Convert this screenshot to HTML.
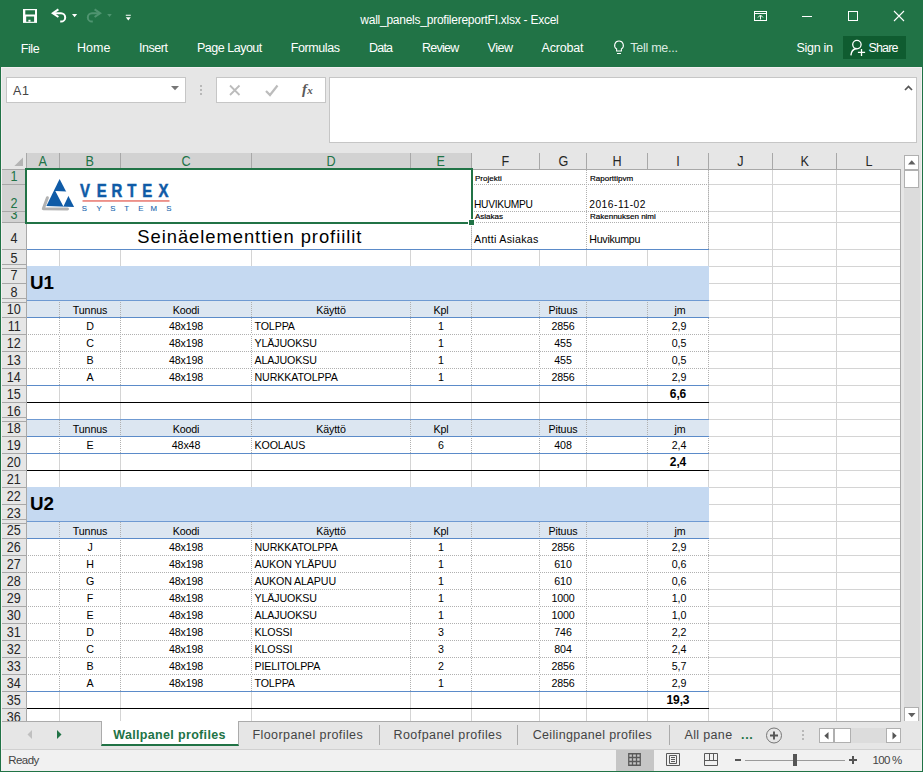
<!DOCTYPE html>
<html><head><meta charset="utf-8"><title>wall_panels_profilereportFI.xlsx - Excel</title>
<style>
*{box-sizing:border-box;margin:0;padding:0}
html,body{width:923px;height:772px;overflow:hidden;background:#fff}
body{position:relative;font-family:"Liberation Sans",sans-serif;color:#000}
.a{position:absolute}
.t{position:absolute;white-space:pre;line-height:1}
.ch{position:absolute;top:153px;height:16px;font-size:14px;line-height:17px;text-align:center;color:#262626}
.ch span,.rh span{display:inline-block;transform:scaleX(.9)}
.ch.s{background:#d2d2d2;color:#217346}
.rh{position:absolute;left:2px;width:24px;font-size:14px;text-align:center;color:#262626;overflow:hidden}
.rh.s{background:#d2d2d2;color:#217346}
.c{position:absolute;font-size:10.67px;letter-spacing:-.12px;white-space:nowrap;line-height:13px;height:13px}
.cc{text-align:center}
.b{font-weight:bold}
.vl{position:absolute;width:1px;background:#d4d4d4}
.hl{position:absolute;height:1px;background:#d4d4d4}
.dv{position:absolute;width:1px;background-image:linear-gradient(#b0b0b0 50%,transparent 50%);background-size:1px 2px}
.dh{position:absolute;height:1px;background-image:linear-gradient(90deg,transparent 50%,#b0b0b0 50%);background-size:2px 1px}
.lb{position:absolute;white-space:nowrap;line-height:1;font-size:8px;-webkit-text-stroke:.18px #000}
</style></head><body>

<div class="a" style="left:0;top:0;width:923px;height:67px;background:#217346"></div>
<div class="a" style="left:1px;top:67px;width:921px;height:86px;background:#e6e6e6"></div>
<svg class="a" style="left:20px;top:6px" width="120" height="20" viewBox="0 0 120 20">
<path d="M3 3h14v13.900H3z" fill="#fff"/><path d="M5.300 4.200h9.700v4.200h-9.700z M6.200 10.600h7.900v5.100h-7.900z" fill="#217346"/><path d="M8.400 13.800h2.100v1.900h-2.100z" fill="#fff"/>
<path d="M33.400 7.200h7.600a4.200 4.200 0 0 1 0 8.400h-.8" fill="none" stroke="#fff" stroke-width="2"/>
<path d="M38.400 3.400l-5.600 3.800 5.600 3.800" fill="none" stroke="#fff" stroke-width="2" stroke-linejoin="miter"/>
<path d="M52 8h5.200l-2.600 3.200z" fill="#fff"/>
<g stroke="#4f9470" fill="none" stroke-width="2"><path d="M79.600 7.200h-7.600a4.200 4.200 0 0 0 0 8.400h.8"/><path d="M74.600 3.400l5.600 3.800-5.600 3.800"/></g>
<path d="M87.200 8h4.600l-2.300 3z" fill="#4f9470"/>
<path d="M105.800 8.700h5v1h-5z M105.800 11.200h5l-2.500 3.400z" fill="#fff"/>
</svg>
<div class="t" style="left:360.30px;top:14.14px;font-size:12px;letter-spacing:-0.246px;color:#fff;">wall_panels_profilereportFI.xlsx - Excel</div>
<svg class="a" style="left:750px;top:6px" width="170" height="22" viewBox="0 0 170 22">
<rect x="4.500" y="5.500" width="12" height="9" fill="none" stroke="#fff" stroke-width="1"/>
<path d="M4.500 7.500h12" stroke="#fff"/><path d="M10.500 13.500v-4M8 11.500l2.500-2.500 2.500 2.500" fill="none" stroke="#fff"/>
<path d="M52 10.500h10" stroke="#fff"/>
<rect x="98.500" y="5.500" width="9" height="9" fill="none" stroke="#fff"/>
<path d="M144 5l10 10M154 5l-10 10" stroke="#fff" stroke-width="1.100"/>
</svg>
<div class="a" style="left:843px;top:36px;width:63px;height:23px;background:#0f5c30"></div>
<div class="t" style="left:20.80px;top:43.42px;font-size:12.5px;letter-spacing:-0.419px;color:#fff;">File</div>
<div class="t" style="left:77.00px;top:42.42px;font-size:12.5px;letter-spacing:0.052px;color:#fff;">Home</div>
<div class="t" style="left:139.00px;top:42.42px;font-size:12.5px;letter-spacing:-0.453px;color:#fff;">Insert</div>
<div class="t" style="left:197.00px;top:42.42px;font-size:12.5px;letter-spacing:-0.490px;color:#fff;">Page Layout</div>
<div class="t" style="left:290.80px;top:42.42px;font-size:12.5px;letter-spacing:-0.413px;color:#fff;">Formulas</div>
<div class="t" style="left:369.00px;top:42.42px;font-size:12.5px;letter-spacing:-0.802px;color:#fff;">Data</div>
<div class="t" style="left:422.00px;top:42.42px;font-size:12.5px;letter-spacing:-0.740px;color:#fff;">Review</div>
<div class="t" style="left:487.50px;top:42.42px;font-size:12.5px;letter-spacing:-0.458px;color:#fff;">View</div>
<div class="t" style="left:541.50px;top:42.42px;font-size:12.5px;letter-spacing:-0.182px;color:#fff;">Acrobat</div>
<div class="t" style="left:630.20px;top:42.42px;font-size:12.5px;letter-spacing:-0.246px;color:#dbeae1;">Tell me...</div>
<div class="t" style="left:796.50px;top:42.42px;font-size:12.5px;letter-spacing:-0.289px;color:#fff;">Sign in</div>
<div class="t" style="left:868.50px;top:42.42px;font-size:12.5px;letter-spacing:-0.840px;color:#fff;">Share</div>
<svg class="a" style="left:612px;top:39px" width="14" height="18" viewBox="0 0 14 18"><path d="M7 2a4.300 4.300 0 0 0-2.400 7.900v2.100h4.800v-2.100A4.300 4.300 0 0 0 7 2z M5 14.500h4" fill="none" stroke="#fff" stroke-width="1.100"/></svg>
<svg class="a" style="left:848px;top:39px" width="18" height="18" viewBox="0 0 18 18"><circle cx="8.900" cy="5.600" r="4.200" fill="none" stroke="#fff" stroke-width="1.300"/><path d="M2.900 16.400c.3-3.600 2.500-6.400 5.600-6.900" fill="none" stroke="#fff" stroke-width="1.400"/><path d="M9.900 13.400h7.200M13.500 10.100v6.900" stroke="#fff" stroke-width="1.300"/></svg>
<div class="a" style="left:6px;top:77px;width:180px;height:26px;background:#fff;border:1px solid #c6c6c6"></div>
<div class="t" style="left:13.00px;top:85.22px;font-size:12.5px;letter-spacing:0.703px;color:#444;">A1</div>
<svg class="a" style="left:171px;top:86px" width="8" height="5"><path d="M0 0h8l-4 4.300z" fill="#777"/></svg>
<div class="a" style="left:200px;top:85px;width:2px;height:2px;background:#b8b8b8;box-shadow:0 4px 0 #b8b8b8,0 8px 0 #b8b8b8"></div>
<div class="a" style="left:216px;top:77px;width:110px;height:26px;background:#fff;border:1px solid #c6c6c6"></div>
<svg class="a" style="left:226px;top:82px" width="95" height="16" viewBox="0 0 95 16">
<path d="M4 3.500l9.500 9.500M13.500 3.500l-9.500 9.500" stroke="#bcbcbc" stroke-width="1.800"/>
<path d="M40 9l4 4 7.500-9.500" fill="none" stroke="#bcbcbc" stroke-width="2.200"/></svg>
<div class="t" style="left:302px;top:81.500px;font-family:'Liberation Serif',serif;font-style:italic;font-weight:bold;font-size:15px;color:#5a5a5a">f<span style="font-size:11px;position:relative;top:0px;left:.3px">x</span></div>
<div class="a" style="left:329px;top:77px;width:588px;height:66px;background:#fff;border:1px solid #c6c6c6"></div>
<svg class="a" style="left:904px;top:85px" width="9" height="6"><path d="M1 5l3.500-3.500L8 5" fill="none" stroke="#555" stroke-width="1.700"/></svg>
<div class="a" style="left:1px;top:153px;width:921px;height:568px;background:#fff"></div>
<div class="a" style="left:1px;top:153px;width:921px;height:16px;background:#e6e6e6"></div>
<div class="a" style="left:1px;top:153px;width:25px;height:568px;background:#e6e6e6"></div>
<div class="a" style="left:901px;top:153px;width:21px;height:569px;background:#e6e6e6"></div>
<svg class="a" style="left:14px;top:157px" width="9" height="9"><path d="M9 .4v8.600H.4z" fill="#b4b4b4"/></svg>
<div class="ch s" style="left:27px;width:32px"><span>A</span></div>
<div class="a" style="left:59px;top:153px;width:1px;height:16px;background:#a8a8a8"></div>
<div class="ch s" style="left:60px;width:60px"><span>B</span></div>
<div class="a" style="left:120px;top:153px;width:1px;height:16px;background:#a8a8a8"></div>
<div class="ch s" style="left:121px;width:130px"><span>C</span></div>
<div class="a" style="left:251px;top:153px;width:1px;height:16px;background:#a8a8a8"></div>
<div class="ch s" style="left:252px;width:158px"><span>D</span></div>
<div class="a" style="left:410px;top:153px;width:1px;height:16px;background:#a8a8a8"></div>
<div class="ch s" style="left:411px;width:60px"><span>E</span></div>
<div class="a" style="left:471px;top:153px;width:1px;height:16px;background:#a8a8a8"></div>
<div class="ch" style="left:472px;width:67px"><span>F</span></div>
<div class="a" style="left:539px;top:153px;width:1px;height:16px;background:#a8a8a8"></div>
<div class="ch" style="left:540px;width:46px"><span>G</span></div>
<div class="a" style="left:586px;top:153px;width:1px;height:16px;background:#a8a8a8"></div>
<div class="ch" style="left:587px;width:60px"><span>H</span></div>
<div class="a" style="left:647px;top:153px;width:1px;height:16px;background:#a8a8a8"></div>
<div class="ch" style="left:648px;width:60px"><span>I</span></div>
<div class="a" style="left:708px;top:153px;width:1px;height:16px;background:#a8a8a8"></div>
<div class="ch" style="left:709px;width:63px"><span>J</span></div>
<div class="a" style="left:772px;top:153px;width:1px;height:16px;background:#a8a8a8"></div>
<div class="ch" style="left:773px;width:63px"><span>K</span></div>
<div class="a" style="left:836px;top:153px;width:1px;height:16px;background:#a8a8a8"></div>
<div class="ch" style="left:837px;width:63px"><span>L</span></div>
<div class="a" style="left:26px;top:153px;width:1px;height:16px;background:#a8a8a8"></div>
<div class="a" style="left:2px;top:169px;width:899px;height:1px;background:#a8a8a8"></div>
<div class="rh s" style="top:170px;height:14px;line-height:12px"><span>1</span></div>
<div class="a" style="left:2px;top:184px;width:24px;height:1px;background:#a8a8a8"></div>
<div class="rh s" style="top:185px;height:26px;line-height:36px"><span>2</span></div>
<div class="a" style="left:2px;top:211px;width:24px;height:1px;background:#a8a8a8"></div>
<div class="rh s" style="top:212px;height:10px;line-height:4px"><span>3</span></div>
<div class="a" style="left:2px;top:222px;width:24px;height:1px;background:#a8a8a8"></div>
<div class="rh" style="top:223px;height:26px;line-height:30px"><span>4</span></div>
<div class="a" style="left:2px;top:249px;width:24px;height:1px;background:#a8a8a8"></div>
<div class="rh" style="top:250px;height:16px;line-height:16px"><span>5</span></div>
<div class="a" style="left:2px;top:264px;width:24px;height:1px;background:#a8a8a8"></div>
<div class="a" style="left:2px;top:268px;width:24px;height:1px;background:#a8a8a8"></div>
<div class="rh" style="top:269px;height:14px;line-height:12px"><span>7</span></div>
<div class="a" style="left:2px;top:283px;width:24px;height:1px;background:#a8a8a8"></div>
<div class="rh" style="top:284px;height:16px;line-height:16px"><span>8</span></div>
<div class="a" style="left:2px;top:298px;width:24px;height:1px;background:#a8a8a8"></div>
<div class="a" style="left:2px;top:302px;width:24px;height:1px;background:#a8a8a8"></div>
<div class="rh" style="top:303px;height:14px;line-height:12px"><span>10</span></div>
<div class="a" style="left:2px;top:317px;width:24px;height:1px;background:#a8a8a8"></div>
<div class="rh" style="top:318px;height:16px;line-height:16px"><span>11</span></div>
<div class="a" style="left:2px;top:334px;width:24px;height:1px;background:#a8a8a8"></div>
<div class="rh" style="top:335px;height:16px;line-height:16px"><span>12</span></div>
<div class="a" style="left:2px;top:351px;width:24px;height:1px;background:#a8a8a8"></div>
<div class="rh" style="top:352px;height:16px;line-height:16px"><span>13</span></div>
<div class="a" style="left:2px;top:368px;width:24px;height:1px;background:#a8a8a8"></div>
<div class="rh" style="top:369px;height:16px;line-height:16px"><span>14</span></div>
<div class="a" style="left:2px;top:385px;width:24px;height:1px;background:#a8a8a8"></div>
<div class="rh" style="top:386px;height:16px;line-height:16px"><span>15</span></div>
<div class="a" style="left:2px;top:402px;width:24px;height:1px;background:#a8a8a8"></div>
<div class="rh" style="top:403px;height:16px;line-height:16px"><span>16</span></div>
<div class="a" style="left:2px;top:417px;width:24px;height:1px;background:#a8a8a8"></div>
<div class="a" style="left:2px;top:421px;width:24px;height:1px;background:#a8a8a8"></div>
<div class="rh" style="top:422px;height:14px;line-height:12px"><span>18</span></div>
<div class="a" style="left:2px;top:436px;width:24px;height:1px;background:#a8a8a8"></div>
<div class="rh" style="top:437px;height:16px;line-height:16px"><span>19</span></div>
<div class="a" style="left:2px;top:453px;width:24px;height:1px;background:#a8a8a8"></div>
<div class="rh" style="top:454px;height:16px;line-height:16px"><span>20</span></div>
<div class="a" style="left:2px;top:470px;width:24px;height:1px;background:#a8a8a8"></div>
<div class="rh" style="top:471px;height:16px;line-height:16px"><span>21</span></div>
<div class="a" style="left:2px;top:487px;width:24px;height:1px;background:#a8a8a8"></div>
<div class="rh" style="top:488px;height:16px;line-height:16px"><span>22</span></div>
<div class="a" style="left:2px;top:504px;width:24px;height:1px;background:#a8a8a8"></div>
<div class="rh" style="top:505px;height:16px;line-height:16px"><span>23</span></div>
<div class="a" style="left:2px;top:519px;width:24px;height:1px;background:#a8a8a8"></div>
<div class="a" style="left:2px;top:523px;width:24px;height:1px;background:#a8a8a8"></div>
<div class="rh" style="top:524px;height:14px;line-height:12px"><span>25</span></div>
<div class="a" style="left:2px;top:538px;width:24px;height:1px;background:#a8a8a8"></div>
<div class="rh" style="top:539px;height:16px;line-height:16px"><span>26</span></div>
<div class="a" style="left:2px;top:555px;width:24px;height:1px;background:#a8a8a8"></div>
<div class="rh" style="top:556px;height:16px;line-height:16px"><span>27</span></div>
<div class="a" style="left:2px;top:572px;width:24px;height:1px;background:#a8a8a8"></div>
<div class="rh" style="top:573px;height:16px;line-height:16px"><span>28</span></div>
<div class="a" style="left:2px;top:589px;width:24px;height:1px;background:#a8a8a8"></div>
<div class="rh" style="top:590px;height:16px;line-height:16px"><span>29</span></div>
<div class="a" style="left:2px;top:606px;width:24px;height:1px;background:#a8a8a8"></div>
<div class="rh" style="top:607px;height:16px;line-height:16px"><span>30</span></div>
<div class="a" style="left:2px;top:623px;width:24px;height:1px;background:#a8a8a8"></div>
<div class="rh" style="top:624px;height:16px;line-height:16px"><span>31</span></div>
<div class="a" style="left:2px;top:640px;width:24px;height:1px;background:#a8a8a8"></div>
<div class="rh" style="top:641px;height:16px;line-height:16px"><span>32</span></div>
<div class="a" style="left:2px;top:657px;width:24px;height:1px;background:#a8a8a8"></div>
<div class="rh" style="top:658px;height:16px;line-height:16px"><span>33</span></div>
<div class="a" style="left:2px;top:674px;width:24px;height:1px;background:#a8a8a8"></div>
<div class="rh" style="top:675px;height:16px;line-height:16px"><span>34</span></div>
<div class="a" style="left:2px;top:691px;width:24px;height:1px;background:#a8a8a8"></div>
<div class="rh" style="top:692px;height:16px;line-height:16px"><span>35</span></div>
<div class="a" style="left:2px;top:708px;width:24px;height:1px;background:#a8a8a8"></div>
<div class="rh" style="top:709px;height:12px;line-height:16px"><span>36</span></div>
<div class="a" style="left:26px;top:170px;width:1px;height:551px;background:#a8a8a8"></div>
<div class="vl" style="left:59px;top:170px;height:551px;background:#d4d4d4"></div>
<div class="vl" style="left:120px;top:170px;height:551px;background:#d4d4d4"></div>
<div class="vl" style="left:251px;top:170px;height:551px;background:#d4d4d4"></div>
<div class="vl" style="left:410px;top:170px;height:551px;background:#d4d4d4"></div>
<div class="vl" style="left:471px;top:170px;height:551px;background:#d4d4d4"></div>
<div class="vl" style="left:539px;top:170px;height:551px;background:#d4d4d4"></div>
<div class="vl" style="left:586px;top:170px;height:551px;background:#d4d4d4"></div>
<div class="vl" style="left:647px;top:170px;height:551px;background:#d4d4d4"></div>
<div class="vl" style="left:708px;top:170px;height:551px;background:#d4d4d4"></div>
<div class="vl" style="left:772px;top:170px;height:551px;background:#d4d4d4"></div>
<div class="vl" style="left:836px;top:170px;height:551px;background:#d4d4d4"></div>
<div class="vl" style="left:900px;top:170px;height:551px;background:#a8a8a8"></div>
<div class="hl" style="left:27px;top:184px;width:873px"></div>
<div class="hl" style="left:27px;top:211px;width:873px"></div>
<div class="hl" style="left:27px;top:222px;width:873px"></div>
<div class="hl" style="left:27px;top:249px;width:873px"></div>
<div class="hl" style="left:27px;top:266px;width:873px"></div>
<div class="hl" style="left:27px;top:283px;width:873px"></div>
<div class="hl" style="left:27px;top:300px;width:873px"></div>
<div class="hl" style="left:27px;top:317px;width:873px"></div>
<div class="hl" style="left:27px;top:334px;width:873px"></div>
<div class="hl" style="left:27px;top:351px;width:873px"></div>
<div class="hl" style="left:27px;top:368px;width:873px"></div>
<div class="hl" style="left:27px;top:385px;width:873px"></div>
<div class="hl" style="left:27px;top:402px;width:873px"></div>
<div class="hl" style="left:27px;top:419px;width:873px"></div>
<div class="hl" style="left:27px;top:436px;width:873px"></div>
<div class="hl" style="left:27px;top:453px;width:873px"></div>
<div class="hl" style="left:27px;top:470px;width:873px"></div>
<div class="hl" style="left:27px;top:487px;width:873px"></div>
<div class="hl" style="left:27px;top:504px;width:873px"></div>
<div class="hl" style="left:27px;top:521px;width:873px"></div>
<div class="hl" style="left:27px;top:538px;width:873px"></div>
<div class="hl" style="left:27px;top:555px;width:873px"></div>
<div class="hl" style="left:27px;top:572px;width:873px"></div>
<div class="hl" style="left:27px;top:589px;width:873px"></div>
<div class="hl" style="left:27px;top:606px;width:873px"></div>
<div class="hl" style="left:27px;top:623px;width:873px"></div>
<div class="hl" style="left:27px;top:640px;width:873px"></div>
<div class="hl" style="left:27px;top:657px;width:873px"></div>
<div class="hl" style="left:27px;top:674px;width:873px"></div>
<div class="hl" style="left:27px;top:691px;width:873px"></div>
<div class="hl" style="left:27px;top:708px;width:873px"></div>
<div class="a" style="left:27px;top:170px;width:444px;height:52px;background:#fff"></div>
<div class="a" style="left:27px;top:223px;width:444px;height:26px;background:#fff"></div>
<div class="a" style="left:472px;top:170px;width:236px;height:79px;background:#fff"></div>
<div class="a" style="left:27px;top:266px;width:682px;height:35px;background:#c5d9f1"></div>
<div class="a" style="left:27px;top:487px;width:682px;height:35px;background:#c5d9f1"></div>
<div class="a" style="left:27px;top:301px;width:682px;height:16px;background:#dce6f1"></div>
<div class="a" style="left:27px;top:300px;width:682px;height:1px;background:#6f9ad2"></div>
<div class="a" style="left:27px;top:317px;width:682px;height:1px;background:#5b8bc9"></div>
<div class="dv" style="left:59px;top:301px;height:16px;background-position:0 1px"></div>
<div class="dv" style="left:120px;top:301px;height:16px;background-position:0 1px"></div>
<div class="dv" style="left:251px;top:301px;height:16px;background-position:0 1px"></div>
<div class="dv" style="left:410px;top:301px;height:16px;background-position:0 1px"></div>
<div class="dv" style="left:471px;top:301px;height:16px;background-position:0 1px"></div>
<div class="dv" style="left:539px;top:301px;height:16px;background-position:0 1px"></div>
<div class="dv" style="left:586px;top:301px;height:16px;background-position:0 1px"></div>
<div class="dv" style="left:647px;top:301px;height:16px;background-position:0 1px"></div>
<div class="a" style="left:27px;top:420px;width:682px;height:16px;background:#dce6f1"></div>
<div class="a" style="left:27px;top:419px;width:682px;height:1px;background:#6f9ad2"></div>
<div class="a" style="left:27px;top:436px;width:682px;height:1px;background:#5b8bc9"></div>
<div class="dv" style="left:59px;top:420px;height:16px"></div>
<div class="dv" style="left:120px;top:420px;height:16px"></div>
<div class="dv" style="left:251px;top:420px;height:16px"></div>
<div class="dv" style="left:410px;top:420px;height:16px"></div>
<div class="dv" style="left:471px;top:420px;height:16px"></div>
<div class="dv" style="left:539px;top:420px;height:16px"></div>
<div class="dv" style="left:586px;top:420px;height:16px"></div>
<div class="dv" style="left:647px;top:420px;height:16px"></div>
<div class="a" style="left:27px;top:522px;width:682px;height:16px;background:#dce6f1"></div>
<div class="a" style="left:27px;top:521px;width:682px;height:1px;background:#6f9ad2"></div>
<div class="a" style="left:27px;top:538px;width:682px;height:1px;background:#5b8bc9"></div>
<div class="dv" style="left:59px;top:522px;height:16px"></div>
<div class="dv" style="left:120px;top:522px;height:16px"></div>
<div class="dv" style="left:251px;top:522px;height:16px"></div>
<div class="dv" style="left:410px;top:522px;height:16px"></div>
<div class="dv" style="left:471px;top:522px;height:16px"></div>
<div class="dv" style="left:539px;top:522px;height:16px"></div>
<div class="dv" style="left:586px;top:522px;height:16px"></div>
<div class="dv" style="left:647px;top:522px;height:16px"></div>
<div class="c cc" style="left:60px;top:304px;width:60px">Tunnus</div>
<div class="c cc" style="left:121px;top:304px;width:130px">Koodi</div>
<div class="c cc" style="left:252px;top:304px;width:158px">Käyttö</div>
<div class="c cc" style="left:411px;top:304px;width:60px">Kpl</div>
<div class="c cc" style="left:540px;top:304px;width:46px">Pituus</div>
<div class="c cc" style="left:650px;top:304px;width:60px">jm</div>
<div class="c cc" style="left:60px;top:423px;width:60px">Tunnus</div>
<div class="c cc" style="left:121px;top:423px;width:130px">Koodi</div>
<div class="c cc" style="left:252px;top:423px;width:158px">Käyttö</div>
<div class="c cc" style="left:411px;top:423px;width:60px">Kpl</div>
<div class="c cc" style="left:540px;top:423px;width:46px">Pituus</div>
<div class="c cc" style="left:650px;top:423px;width:60px">jm</div>
<div class="c cc" style="left:60px;top:525px;width:60px">Tunnus</div>
<div class="c cc" style="left:121px;top:525px;width:130px">Koodi</div>
<div class="c cc" style="left:252px;top:525px;width:158px">Käyttö</div>
<div class="c cc" style="left:411px;top:525px;width:60px">Kpl</div>
<div class="c cc" style="left:540px;top:525px;width:46px">Pituus</div>
<div class="c cc" style="left:650px;top:525px;width:60px">jm</div>
<div class="a" style="left:27px;top:318px;width:682px;height:17px;background:#fff"></div>
<div class="dh" style="left:27px;top:334px;width:682px"></div>
<div class="dv" style="left:59px;top:318px;height:16px"></div>
<div class="dv" style="left:120px;top:318px;height:16px"></div>
<div class="dv" style="left:251px;top:318px;height:16px"></div>
<div class="dv" style="left:410px;top:318px;height:16px"></div>
<div class="dv" style="left:471px;top:318px;height:16px"></div>
<div class="dv" style="left:539px;top:318px;height:16px"></div>
<div class="dv" style="left:586px;top:318px;height:16px"></div>
<div class="dv" style="left:647px;top:318px;height:16px"></div>
<div class="dv" style="left:708px;top:318px;height:16px"></div>
<div class="c cc" style="left:60px;top:320px;width:60px">D</div>
<div class="c cc" style="left:121px;top:320px;width:130px">48x198</div>
<div class="c " style="left:254.5px;top:320px;width:158px">TOLPPA</div>
<div class="c cc" style="left:411px;top:320px;width:60px">1</div>
<div class="c cc" style="left:540px;top:320px;width:46px">2856</div>
<div class="c cc" style="left:649px;top:320px;width:60px">2,9</div>
<div class="a" style="left:27px;top:335px;width:682px;height:17px;background:#fff"></div>
<div class="dh" style="left:27px;top:351px;width:682px"></div>
<div class="dv" style="left:59px;top:335px;height:16px;background-position:0 1px"></div>
<div class="dv" style="left:120px;top:335px;height:16px;background-position:0 1px"></div>
<div class="dv" style="left:251px;top:335px;height:16px;background-position:0 1px"></div>
<div class="dv" style="left:410px;top:335px;height:16px;background-position:0 1px"></div>
<div class="dv" style="left:471px;top:335px;height:16px;background-position:0 1px"></div>
<div class="dv" style="left:539px;top:335px;height:16px;background-position:0 1px"></div>
<div class="dv" style="left:586px;top:335px;height:16px;background-position:0 1px"></div>
<div class="dv" style="left:647px;top:335px;height:16px;background-position:0 1px"></div>
<div class="dv" style="left:708px;top:335px;height:16px;background-position:0 1px"></div>
<div class="c cc" style="left:60px;top:337px;width:60px">C</div>
<div class="c cc" style="left:121px;top:337px;width:130px">48x198</div>
<div class="c " style="left:254.5px;top:337px;width:158px">YLÄJUOKSU</div>
<div class="c cc" style="left:411px;top:337px;width:60px">1</div>
<div class="c cc" style="left:540px;top:337px;width:46px">455</div>
<div class="c cc" style="left:649px;top:337px;width:60px">0,5</div>
<div class="a" style="left:27px;top:352px;width:682px;height:17px;background:#fff"></div>
<div class="dh" style="left:27px;top:368px;width:682px"></div>
<div class="dv" style="left:59px;top:352px;height:16px"></div>
<div class="dv" style="left:120px;top:352px;height:16px"></div>
<div class="dv" style="left:251px;top:352px;height:16px"></div>
<div class="dv" style="left:410px;top:352px;height:16px"></div>
<div class="dv" style="left:471px;top:352px;height:16px"></div>
<div class="dv" style="left:539px;top:352px;height:16px"></div>
<div class="dv" style="left:586px;top:352px;height:16px"></div>
<div class="dv" style="left:647px;top:352px;height:16px"></div>
<div class="dv" style="left:708px;top:352px;height:16px"></div>
<div class="c cc" style="left:60px;top:354px;width:60px">B</div>
<div class="c cc" style="left:121px;top:354px;width:130px">48x198</div>
<div class="c " style="left:254.5px;top:354px;width:158px">ALAJUOKSU</div>
<div class="c cc" style="left:411px;top:354px;width:60px">1</div>
<div class="c cc" style="left:540px;top:354px;width:46px">455</div>
<div class="c cc" style="left:649px;top:354px;width:60px">0,5</div>
<div class="a" style="left:27px;top:369px;width:682px;height:17px;background:#fff"></div>
<div class="a" style="left:27px;top:385px;width:682px;height:1px;background:#5b8bc9"></div>
<div class="dv" style="left:59px;top:369px;height:16px;background-position:0 1px"></div>
<div class="dv" style="left:120px;top:369px;height:16px;background-position:0 1px"></div>
<div class="dv" style="left:251px;top:369px;height:16px;background-position:0 1px"></div>
<div class="dv" style="left:410px;top:369px;height:16px;background-position:0 1px"></div>
<div class="dv" style="left:471px;top:369px;height:16px;background-position:0 1px"></div>
<div class="dv" style="left:539px;top:369px;height:16px;background-position:0 1px"></div>
<div class="dv" style="left:586px;top:369px;height:16px;background-position:0 1px"></div>
<div class="dv" style="left:647px;top:369px;height:16px;background-position:0 1px"></div>
<div class="dv" style="left:708px;top:369px;height:16px;background-position:0 1px"></div>
<div class="c cc" style="left:60px;top:371px;width:60px">A</div>
<div class="c cc" style="left:121px;top:371px;width:130px">48x198</div>
<div class="c " style="left:254.5px;top:371px;width:158px">NURKKATOLPPA</div>
<div class="c cc" style="left:411px;top:371px;width:60px">1</div>
<div class="c cc" style="left:540px;top:371px;width:46px">2856</div>
<div class="c cc" style="left:649px;top:371px;width:60px">2,9</div>
<div class="a" style="left:27px;top:437px;width:682px;height:17px;background:#fff"></div>
<div class="a" style="left:27px;top:453px;width:682px;height:1px;background:#5b8bc9"></div>
<div class="dv" style="left:59px;top:437px;height:16px;background-position:0 1px"></div>
<div class="dv" style="left:120px;top:437px;height:16px;background-position:0 1px"></div>
<div class="dv" style="left:251px;top:437px;height:16px;background-position:0 1px"></div>
<div class="dv" style="left:410px;top:437px;height:16px;background-position:0 1px"></div>
<div class="dv" style="left:471px;top:437px;height:16px;background-position:0 1px"></div>
<div class="dv" style="left:539px;top:437px;height:16px;background-position:0 1px"></div>
<div class="dv" style="left:586px;top:437px;height:16px;background-position:0 1px"></div>
<div class="dv" style="left:647px;top:437px;height:16px;background-position:0 1px"></div>
<div class="dv" style="left:708px;top:437px;height:16px;background-position:0 1px"></div>
<div class="c cc" style="left:60px;top:439px;width:60px">E</div>
<div class="c cc" style="left:121px;top:439px;width:130px">48x48</div>
<div class="c " style="left:254.5px;top:439px;width:158px">KOOLAUS</div>
<div class="c cc" style="left:411px;top:439px;width:60px">6</div>
<div class="c cc" style="left:540px;top:439px;width:46px">408</div>
<div class="c cc" style="left:649px;top:439px;width:60px">2,4</div>
<div class="a" style="left:27px;top:539px;width:682px;height:17px;background:#fff"></div>
<div class="dh" style="left:27px;top:555px;width:682px"></div>
<div class="dv" style="left:59px;top:539px;height:16px;background-position:0 1px"></div>
<div class="dv" style="left:120px;top:539px;height:16px;background-position:0 1px"></div>
<div class="dv" style="left:251px;top:539px;height:16px;background-position:0 1px"></div>
<div class="dv" style="left:410px;top:539px;height:16px;background-position:0 1px"></div>
<div class="dv" style="left:471px;top:539px;height:16px;background-position:0 1px"></div>
<div class="dv" style="left:539px;top:539px;height:16px;background-position:0 1px"></div>
<div class="dv" style="left:586px;top:539px;height:16px;background-position:0 1px"></div>
<div class="dv" style="left:647px;top:539px;height:16px;background-position:0 1px"></div>
<div class="dv" style="left:708px;top:539px;height:16px;background-position:0 1px"></div>
<div class="c cc" style="left:60px;top:541px;width:60px">J</div>
<div class="c cc" style="left:121px;top:541px;width:130px">48x198</div>
<div class="c " style="left:254.5px;top:541px;width:158px">NURKKATOLPPA</div>
<div class="c cc" style="left:411px;top:541px;width:60px">1</div>
<div class="c cc" style="left:540px;top:541px;width:46px">2856</div>
<div class="c cc" style="left:649px;top:541px;width:60px">2,9</div>
<div class="a" style="left:27px;top:556px;width:682px;height:17px;background:#fff"></div>
<div class="dh" style="left:27px;top:572px;width:682px"></div>
<div class="dv" style="left:59px;top:556px;height:16px"></div>
<div class="dv" style="left:120px;top:556px;height:16px"></div>
<div class="dv" style="left:251px;top:556px;height:16px"></div>
<div class="dv" style="left:410px;top:556px;height:16px"></div>
<div class="dv" style="left:471px;top:556px;height:16px"></div>
<div class="dv" style="left:539px;top:556px;height:16px"></div>
<div class="dv" style="left:586px;top:556px;height:16px"></div>
<div class="dv" style="left:647px;top:556px;height:16px"></div>
<div class="dv" style="left:708px;top:556px;height:16px"></div>
<div class="c cc" style="left:60px;top:558px;width:60px">H</div>
<div class="c cc" style="left:121px;top:558px;width:130px">48x198</div>
<div class="c " style="left:254.5px;top:558px;width:158px">AUKON YLÄPUU</div>
<div class="c cc" style="left:411px;top:558px;width:60px">1</div>
<div class="c cc" style="left:540px;top:558px;width:46px">610</div>
<div class="c cc" style="left:649px;top:558px;width:60px">0,6</div>
<div class="a" style="left:27px;top:573px;width:682px;height:17px;background:#fff"></div>
<div class="dh" style="left:27px;top:589px;width:682px"></div>
<div class="dv" style="left:59px;top:573px;height:16px;background-position:0 1px"></div>
<div class="dv" style="left:120px;top:573px;height:16px;background-position:0 1px"></div>
<div class="dv" style="left:251px;top:573px;height:16px;background-position:0 1px"></div>
<div class="dv" style="left:410px;top:573px;height:16px;background-position:0 1px"></div>
<div class="dv" style="left:471px;top:573px;height:16px;background-position:0 1px"></div>
<div class="dv" style="left:539px;top:573px;height:16px;background-position:0 1px"></div>
<div class="dv" style="left:586px;top:573px;height:16px;background-position:0 1px"></div>
<div class="dv" style="left:647px;top:573px;height:16px;background-position:0 1px"></div>
<div class="dv" style="left:708px;top:573px;height:16px;background-position:0 1px"></div>
<div class="c cc" style="left:60px;top:575px;width:60px">G</div>
<div class="c cc" style="left:121px;top:575px;width:130px">48x198</div>
<div class="c " style="left:254.5px;top:575px;width:158px">AUKON ALAPUU</div>
<div class="c cc" style="left:411px;top:575px;width:60px">1</div>
<div class="c cc" style="left:540px;top:575px;width:46px">610</div>
<div class="c cc" style="left:649px;top:575px;width:60px">0,6</div>
<div class="a" style="left:27px;top:590px;width:682px;height:17px;background:#fff"></div>
<div class="dh" style="left:27px;top:606px;width:682px"></div>
<div class="dv" style="left:59px;top:590px;height:16px"></div>
<div class="dv" style="left:120px;top:590px;height:16px"></div>
<div class="dv" style="left:251px;top:590px;height:16px"></div>
<div class="dv" style="left:410px;top:590px;height:16px"></div>
<div class="dv" style="left:471px;top:590px;height:16px"></div>
<div class="dv" style="left:539px;top:590px;height:16px"></div>
<div class="dv" style="left:586px;top:590px;height:16px"></div>
<div class="dv" style="left:647px;top:590px;height:16px"></div>
<div class="dv" style="left:708px;top:590px;height:16px"></div>
<div class="c cc" style="left:60px;top:592px;width:60px">F</div>
<div class="c cc" style="left:121px;top:592px;width:130px">48x198</div>
<div class="c " style="left:254.5px;top:592px;width:158px">YLÄJUOKSU</div>
<div class="c cc" style="left:411px;top:592px;width:60px">1</div>
<div class="c cc" style="left:540px;top:592px;width:46px">1000</div>
<div class="c cc" style="left:649px;top:592px;width:60px">1,0</div>
<div class="a" style="left:27px;top:607px;width:682px;height:17px;background:#fff"></div>
<div class="dh" style="left:27px;top:623px;width:682px"></div>
<div class="dv" style="left:59px;top:607px;height:16px;background-position:0 1px"></div>
<div class="dv" style="left:120px;top:607px;height:16px;background-position:0 1px"></div>
<div class="dv" style="left:251px;top:607px;height:16px;background-position:0 1px"></div>
<div class="dv" style="left:410px;top:607px;height:16px;background-position:0 1px"></div>
<div class="dv" style="left:471px;top:607px;height:16px;background-position:0 1px"></div>
<div class="dv" style="left:539px;top:607px;height:16px;background-position:0 1px"></div>
<div class="dv" style="left:586px;top:607px;height:16px;background-position:0 1px"></div>
<div class="dv" style="left:647px;top:607px;height:16px;background-position:0 1px"></div>
<div class="dv" style="left:708px;top:607px;height:16px;background-position:0 1px"></div>
<div class="c cc" style="left:60px;top:609px;width:60px">E</div>
<div class="c cc" style="left:121px;top:609px;width:130px">48x198</div>
<div class="c " style="left:254.5px;top:609px;width:158px">ALAJUOKSU</div>
<div class="c cc" style="left:411px;top:609px;width:60px">1</div>
<div class="c cc" style="left:540px;top:609px;width:46px">1000</div>
<div class="c cc" style="left:649px;top:609px;width:60px">1,0</div>
<div class="a" style="left:27px;top:624px;width:682px;height:17px;background:#fff"></div>
<div class="dh" style="left:27px;top:640px;width:682px"></div>
<div class="dv" style="left:59px;top:624px;height:16px"></div>
<div class="dv" style="left:120px;top:624px;height:16px"></div>
<div class="dv" style="left:251px;top:624px;height:16px"></div>
<div class="dv" style="left:410px;top:624px;height:16px"></div>
<div class="dv" style="left:471px;top:624px;height:16px"></div>
<div class="dv" style="left:539px;top:624px;height:16px"></div>
<div class="dv" style="left:586px;top:624px;height:16px"></div>
<div class="dv" style="left:647px;top:624px;height:16px"></div>
<div class="dv" style="left:708px;top:624px;height:16px"></div>
<div class="c cc" style="left:60px;top:626px;width:60px">D</div>
<div class="c cc" style="left:121px;top:626px;width:130px">48x198</div>
<div class="c " style="left:254.5px;top:626px;width:158px">KLOSSI</div>
<div class="c cc" style="left:411px;top:626px;width:60px">3</div>
<div class="c cc" style="left:540px;top:626px;width:46px">746</div>
<div class="c cc" style="left:649px;top:626px;width:60px">2,2</div>
<div class="a" style="left:27px;top:641px;width:682px;height:17px;background:#fff"></div>
<div class="dh" style="left:27px;top:657px;width:682px"></div>
<div class="dv" style="left:59px;top:641px;height:16px;background-position:0 1px"></div>
<div class="dv" style="left:120px;top:641px;height:16px;background-position:0 1px"></div>
<div class="dv" style="left:251px;top:641px;height:16px;background-position:0 1px"></div>
<div class="dv" style="left:410px;top:641px;height:16px;background-position:0 1px"></div>
<div class="dv" style="left:471px;top:641px;height:16px;background-position:0 1px"></div>
<div class="dv" style="left:539px;top:641px;height:16px;background-position:0 1px"></div>
<div class="dv" style="left:586px;top:641px;height:16px;background-position:0 1px"></div>
<div class="dv" style="left:647px;top:641px;height:16px;background-position:0 1px"></div>
<div class="dv" style="left:708px;top:641px;height:16px;background-position:0 1px"></div>
<div class="c cc" style="left:60px;top:643px;width:60px">C</div>
<div class="c cc" style="left:121px;top:643px;width:130px">48x198</div>
<div class="c " style="left:254.5px;top:643px;width:158px">KLOSSI</div>
<div class="c cc" style="left:411px;top:643px;width:60px">3</div>
<div class="c cc" style="left:540px;top:643px;width:46px">804</div>
<div class="c cc" style="left:649px;top:643px;width:60px">2,4</div>
<div class="a" style="left:27px;top:658px;width:682px;height:17px;background:#fff"></div>
<div class="dh" style="left:27px;top:674px;width:682px"></div>
<div class="dv" style="left:59px;top:658px;height:16px"></div>
<div class="dv" style="left:120px;top:658px;height:16px"></div>
<div class="dv" style="left:251px;top:658px;height:16px"></div>
<div class="dv" style="left:410px;top:658px;height:16px"></div>
<div class="dv" style="left:471px;top:658px;height:16px"></div>
<div class="dv" style="left:539px;top:658px;height:16px"></div>
<div class="dv" style="left:586px;top:658px;height:16px"></div>
<div class="dv" style="left:647px;top:658px;height:16px"></div>
<div class="dv" style="left:708px;top:658px;height:16px"></div>
<div class="c cc" style="left:60px;top:660px;width:60px">B</div>
<div class="c cc" style="left:121px;top:660px;width:130px">48x198</div>
<div class="c " style="left:254.5px;top:660px;width:158px">PIELITOLPPA</div>
<div class="c cc" style="left:411px;top:660px;width:60px">2</div>
<div class="c cc" style="left:540px;top:660px;width:46px">2856</div>
<div class="c cc" style="left:649px;top:660px;width:60px">5,7</div>
<div class="a" style="left:27px;top:675px;width:682px;height:17px;background:#fff"></div>
<div class="a" style="left:27px;top:691px;width:682px;height:1px;background:#5b8bc9"></div>
<div class="dv" style="left:59px;top:675px;height:16px;background-position:0 1px"></div>
<div class="dv" style="left:120px;top:675px;height:16px;background-position:0 1px"></div>
<div class="dv" style="left:251px;top:675px;height:16px;background-position:0 1px"></div>
<div class="dv" style="left:410px;top:675px;height:16px;background-position:0 1px"></div>
<div class="dv" style="left:471px;top:675px;height:16px;background-position:0 1px"></div>
<div class="dv" style="left:539px;top:675px;height:16px;background-position:0 1px"></div>
<div class="dv" style="left:586px;top:675px;height:16px;background-position:0 1px"></div>
<div class="dv" style="left:647px;top:675px;height:16px;background-position:0 1px"></div>
<div class="dv" style="left:708px;top:675px;height:16px;background-position:0 1px"></div>
<div class="c cc" style="left:60px;top:677px;width:60px">A</div>
<div class="c cc" style="left:121px;top:677px;width:130px">48x198</div>
<div class="c " style="left:254.5px;top:677px;width:158px">TOLPPA</div>
<div class="c cc" style="left:411px;top:677px;width:60px">1</div>
<div class="c cc" style="left:540px;top:677px;width:46px">2856</div>
<div class="c cc" style="left:649px;top:677px;width:60px">2,9</div>
<div class="a" style="left:27px;top:402px;width:682px;height:1px;background:#000"></div>
<div class="c cc b" style="left:648px;top:387.5px;width:60px;font-size:12px">6,6</div>
<div class="a" style="left:27px;top:470px;width:682px;height:1px;background:#000"></div>
<div class="c cc b" style="left:648px;top:455.5px;width:60px;font-size:12px">2,4</div>
<div class="a" style="left:27px;top:708px;width:682px;height:1px;background:#000"></div>
<div class="c cc b" style="left:648px;top:693.5px;width:60px;font-size:12px">19,3</div>
<div class="t b" style="left:30px;top:274.2px;font-size:18.800px">U1</div>
<div class="t b" style="left:30px;top:495.2px;font-size:18.800px">U2</div>
<div class="a" style="left:27px;top:249px;width:682px;height:1px;background:#5b8bc9"></div>
<div class="t" style="left:137.30px;top:227.82px;font-size:18.4px;letter-spacing:0.949px;color:#000;">Seinäelementtien profiilit</div>
<div class="lb" style="left:475px;top:174.500px">Projekti</div>
<div class="lb" style="left:590px;top:174.500px">Raporttipvm</div>
<div class="t" style="left:474.00px;top:199.57px;font-size:10.2px;letter-spacing:-0.293px;color:#000;">HUVIKUMPU</div>
<div class="t" style="left:589.20px;top:199.57px;font-size:10.2px;letter-spacing:0.549px;color:#000;">2016-11-02</div>
<div class="lb" style="left:475px;top:212.500px">Asiakas</div>
<div class="lb" style="left:590px;top:212.500px">Rakennuksen nimi</div>
<div class="t" style="left:474.00px;top:234.27px;font-size:10.67px;letter-spacing:0.274px;color:#000;">Antti Asiakas</div>
<div class="t" style="left:589.20px;top:234.27px;font-size:10.67px;letter-spacing:-0.252px;color:#000;">Huvikumpu</div>
<div class="dh" style="left:472px;top:184px;width:237px;background-position:1px 0"></div>
<div class="dh" style="left:472px;top:211px;width:237px;background-position:1px 0"></div>
<div class="dh" style="left:472px;top:222px;width:237px;background-position:1px 0"></div>
<div class="dv" style="left:586px;top:170px;height:79px"></div>
<div class="dv" style="left:708px;top:170px;height:79px"></div>
<div class="dv" style="left:471px;top:224px;height:25px"></div>
<div class="a" style="left:25px;top:168px;width:448px;height:56px;border:2px solid #217346"></div>
<div class="a" style="left:468px;top:219px;width:7px;height:7px;background:#217346;border:1px solid #fff"></div>
<svg class="a" style="left:40px;top:176px" width="135" height="40" viewBox="40 176 135 40">
<path d="M47.400 197.700L43.300 208.700L67.500 209.100" fill="none" stroke="#b2b2b2" stroke-width="3" stroke-linejoin="round" stroke-linecap="round"/>
<path d="M59.600 178.900L74.100 207L46.400 206z" fill="#0f5ba7"/>
<path d="M66.200 191.600L55.300 191.100L63.400 206.500L68.400 195.900L72 193z" fill="#fff"/>
<text transform="scale(.85,1)" y="196.700" x="94.100 113.800 131.300 149.600 167.300 186.600" font-family="Liberation Sans, sans-serif" font-weight="bold" font-size="17.600" fill="#0f5ba7" stroke="#0f5ba7" stroke-width=".5">VERTEX</text>
<rect x="82.500" y="200.200" width="87" height="1.500" fill="#e8766d"/>
<text y="210.600" x="81.800 96.500 110.300 124.300 138.300 150.400 166.200" font-family="Liberation Sans, sans-serif" font-size="7.800" fill="#2469b0" stroke="#2469b0" stroke-width=".12">SYSTEMS</text>
</svg>
<div class="a" style="left:904px;top:170px;width:16px;height:551px;background:#dcdcdc"></div>
<div class="a" style="left:904px;top:155px;width:15px;height:15px;background:#fff;border:1px solid #b0b0b0"></div>
<svg class="a" style="left:908px;top:160px" width="8" height="5"><path d="M0 4.500h7.500L3.750 .3z" fill="#606060"/></svg>
<div class="a" style="left:904px;top:170px;width:15px;height:18px;background:#fff;border:1px solid #b0b0b0"></div>
<div class="a" style="left:904px;top:707px;width:15px;height:15px;background:#fff;border:1px solid #b0b0b0"></div>
<svg class="a" style="left:908px;top:713px" width="8" height="5"><path d="M0 0h7.500L3.750 4.200z" fill="#606060"/></svg>
<div class="a" style="left:1px;top:721px;width:921px;height:28px;background:#e6e6e6"></div>
<div class="a" style="left:1px;top:721px;width:900px;height:1px;background:#ababab"></div>
<svg class="a" style="left:26px;top:730px" width="40" height="9"><path d="M6 0v9L1.500 4.500z" fill="#c0c0c0"/><path d="M31 0v9l4.500-4.500z" fill="#217346"/></svg>
<div class="a" style="left:101px;top:721px;width:138px;height:25px;background:#fff;border-bottom:2px solid #217346;border-left:1px solid #ababab;border-right:1px solid #ababab"></div>
<div class="t" style="left:113.25px;top:728.67px;font-size:12.5px;letter-spacing:0.337px;color:#217346;font-weight:bold;">Wallpanel profiles</div>
<div class="t" style="left:252.50px;top:728.67px;font-size:12.5px;letter-spacing:0.411px;color:#444;">Floorpanel profiles</div>
<div class="t" style="left:393.50px;top:728.67px;font-size:12.5px;letter-spacing:0.440px;color:#444;">Roofpanel profiles</div>
<div class="t" style="left:532.75px;top:728.67px;font-size:12.5px;letter-spacing:0.321px;color:#444;">Ceilingpanel profiles</div>
<div class="t" style="left:684.50px;top:728.67px;font-size:12.5px;letter-spacing:0.345px;color:#444;">All pane</div>
<div class="t" style="left:741.10px;top:728.67px;font-size:12.5px;letter-spacing:0.639px;color:#217346;font-weight:bold;">...</div>
<div class="a" style="left:379px;top:725px;width:1px;height:20px;background:#ababab"></div>
<div class="a" style="left:517px;top:725px;width:1px;height:20px;background:#ababab"></div>
<div class="a" style="left:669px;top:725px;width:1px;height:20px;background:#ababab"></div>
<svg class="a" style="left:765px;top:727px" width="18" height="18"><circle cx="9" cy="8.500" r="7.500" fill="none" stroke="#777" stroke-width="1"/><path d="M5 8.500h8M9 4.500v8" stroke="#555" stroke-width="1.900"/></svg>
<div class="a" style="left:802px;top:730px;width:2px;height:2px;background:#b8b8b8;box-shadow:0 4px 0 #b8b8b8,0 8px 0 #b8b8b8"></div>
<div class="a" style="left:834px;top:728px;width:53px;height:15px;background:#dcdcdc"></div>
<div class="a" style="left:819px;top:728px;width:15px;height:15px;background:#fff;border:1px solid #b0b0b0"></div>
<svg class="a" style="left:824px;top:732px" width="5" height="8"><path d="M4.500 0v7.500L.3 3.750z" fill="#555"/></svg>
<div class="a" style="left:834px;top:728px;width:17px;height:15px;background:#fff;border:1px solid #b0b0b0"></div>
<div class="a" style="left:886px;top:728px;width:15px;height:15px;background:#fff;border:1px solid #b0b0b0"></div>
<svg class="a" style="left:892px;top:732px" width="5" height="8"><path d="M.5 0v7.500L4.700 3.750z" fill="#555"/></svg>
<div class="a" style="left:1px;top:749px;width:921px;height:1px;background:#d0d0d0"></div>
<div class="a" style="left:1px;top:750px;width:921px;height:21px;background:#f1f1f1"></div>
<div class="t" style="left:8.25px;top:754.52px;font-size:11.5px;letter-spacing:-0.562px;color:#444;">Ready</div>
<div class="a" style="left:616px;top:750px;width:38px;height:21px;background:#c6c6c6"></div>
<svg class="a" style="left:626px;top:752px" width="100" height="16" viewBox="0 0 100 16">
<path d="M2.750 1.750h11.500v11.500h-11.500z M2.750 5.500h11.500M2.750 9.500h11.500M6.500 1.750v11.500M10.500 1.750v11.500" fill="none" stroke="#595959" stroke-width="1.300"/>
<path d="M40.500 1.500h13v12h-13z M43.500 3.500h7v8h-7z M45 5.500h4M45 7.500h4M45 9.500h4" fill="none" stroke="#595959" stroke-width="1"/>
<path d="M78.500 1.500h13v12h-13z M83.500 1.500v7 M78.500 8.500h13 M87.500 1.500v7" fill="none" stroke="#595959" stroke-width="1"/>
</svg>
<div class="a" style="left:735px;top:759px;width:6px;height:2px;background:#555"></div>
<div class="a" style="left:745px;top:760px;width:100px;height:1px;background:#9a9a9a"></div>
<div class="a" style="left:793px;top:754px;width:4px;height:12px;background:#555"></div>
<div class="a" style="left:849px;top:759px;width:8px;height:2px;background:#555"></div><div class="a" style="left:852px;top:756px;width:2px;height:8px;background:#555"></div>
<div class="t" style="left:872.50px;top:754.52px;font-size:11.5px;letter-spacing:-0.702px;color:#444;">100 %</div>
<div class="a" style="left:1px;top:67px;width:1px;height:704px;background:#f4f0f2"></div><div class="a" style="left:921px;top:67px;width:1px;height:704px;background:#f4f0f2"></div><div class="a" style="left:1px;top:67px;width:921px;height:1px;background:#f4f0f2"></div>
<div class="a" style="left:0;top:0;width:1px;height:772px;background:#217346"></div>
<div class="a" style="left:922px;top:0;width:1px;height:772px;background:#217346"></div>
<div class="a" style="left:0;top:771px;width:923px;height:1px;background:#217346"></div>
</body></html>
